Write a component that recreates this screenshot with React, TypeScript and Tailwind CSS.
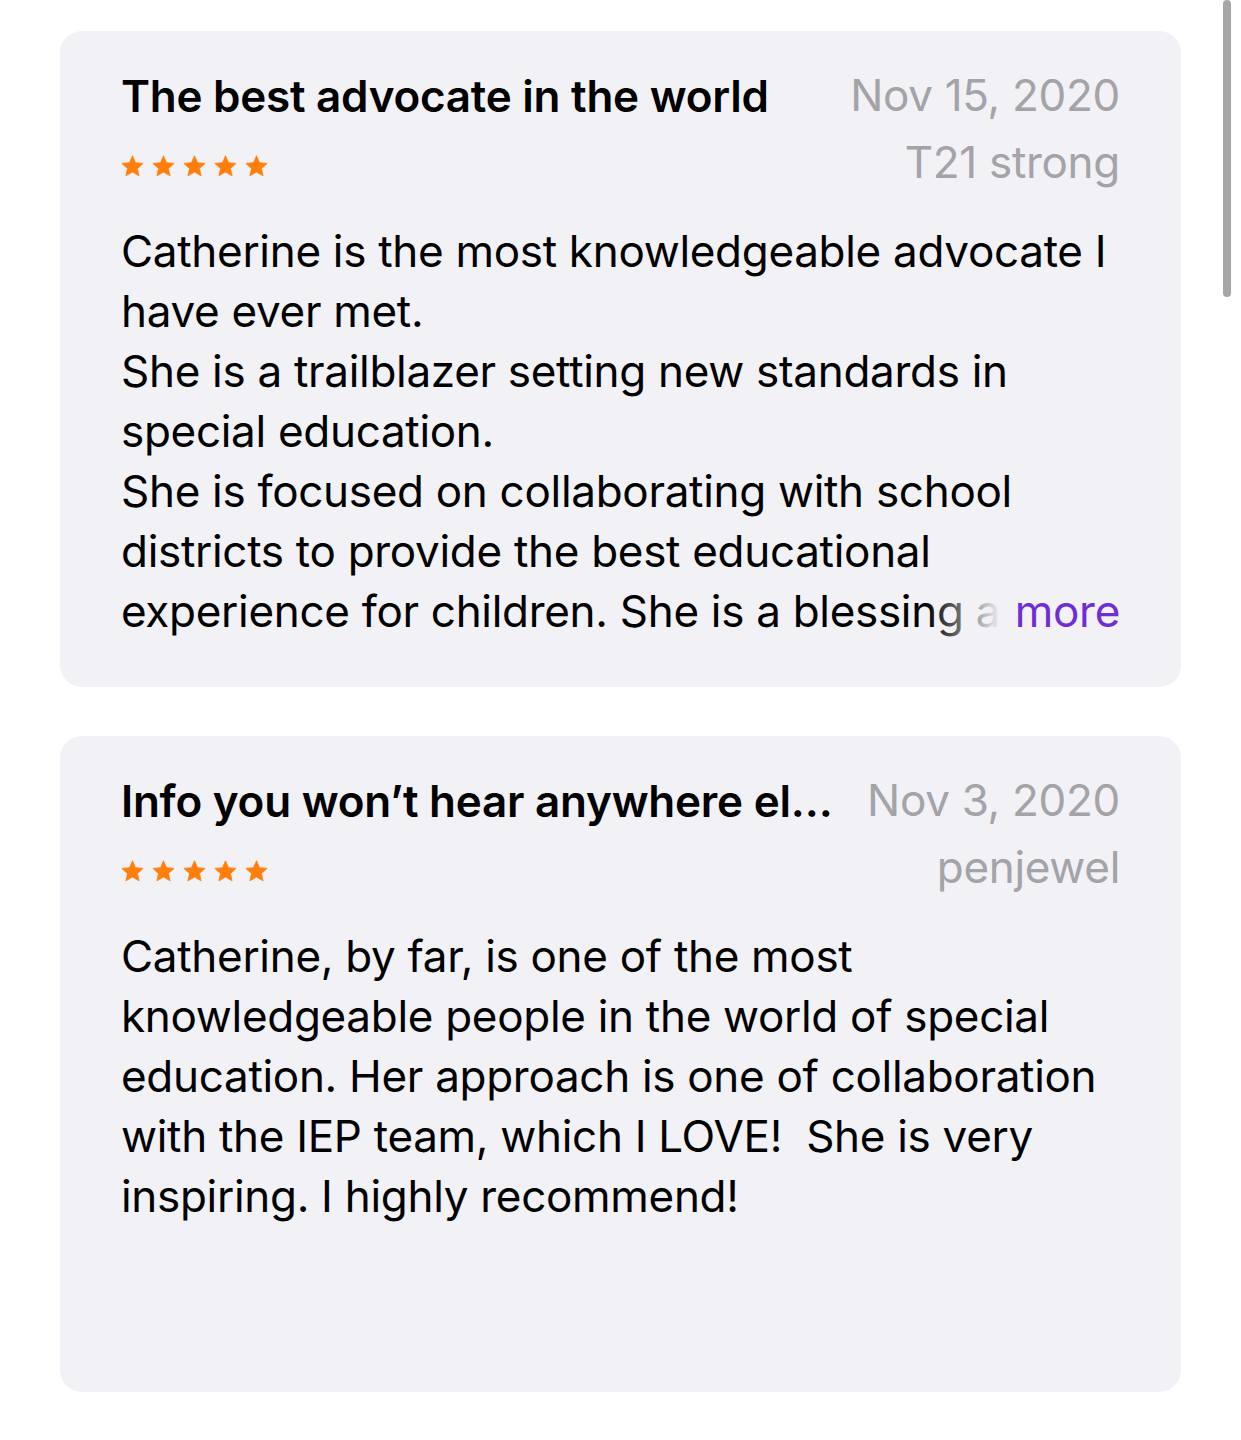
import React from "react";

function Stars() {
  return (
    <div className="flex gap-[8px] mt-[31px]">
      {[0, 1, 2, 3, 4].map((i) => (
        <svg key={i} width="23" height="22" viewBox="0 0 24 23">
          <path
            d="M12 .8L15.2 8l7.9.8-5.9 5.3 1.7 7.7L12 17.9l-6.9 3.9 1.7-7.7L.9 8.8 8.8 8z"
            fill="#ff7f0a"
            stroke="#ff7f0a"
            strokeWidth="0.8"
            strokeLinejoin="round"
          />
        </svg>
      ))}
    </div>
  );
}

function Card({
  title,
  date,
  author,
  children,
}: {
  title: string;
  date: string;
  author: string;
  children: React.ReactNode;
}) {
  return (
    <div className="h-[656px] rounded-[22px] bg-[#f1f1f6] px-[61px] pt-[37px]">
      <div className="flex items-start justify-between gap-[30px]">
        <div className="min-w-0 flex-1">
          <div className="truncate text-[44px] leading-[56px] font-semibold text-black tracking-[-0.25px]">
            {title}
          </div>
          <Stars />
        </div>
        <div className="shrink-0 text-right text-[44px] leading-[67px] text-[#a3a3a8] tracking-[-0.3px] -mt-[6px]">
          <div>{date}</div>
          <div>{author}</div>
        </div>
      </div>
      {children}
    </div>
  );
}

export default function App() {
  return (
    <div
      className="relative min-h-[1440px] bg-white px-[60px] pt-[31px]"
      style={{ fontFamily: "Inter, 'Noto Sans', sans-serif" }}
    >
      <div className="flex flex-col gap-[49px]">
        <Card title="The best advocate in the world" date="Nov 15, 2020" author="T21 strong">
          <div className="relative mt-[25px]">
            <p className="text-[44px] leading-[60px] text-black tracking-[-0.3px] line-clamp-7">
              Catherine is the most knowledgeable advocate I have ever met.
              <br />
              She is a trailblazer setting new standards in special education.
              <br />
              She is focused on collaborating with school districts to provide the best educational
              experience for children. She is a blessing and a gift to every family she works with.
            </p>
            <div className="absolute bottom-0 right-0 flex h-[60px] items-center">
              <div className="h-full w-[75px] bg-gradient-to-r from-[#f1f1f6]/0 to-[#f1f1f6]" />
              <div className="flex h-full items-center bg-[#f1f1f6] pl-[14px] text-[44px] text-[#6f2dd6] tracking-[-0.3px]">
                more
              </div>
            </div>
          </div>
        </Card>
        <Card title="Info you won’t hear anywhere else" date="Nov 3, 2020" author="penjewel">
          <p className="mt-[25px] text-[44px] leading-[60px] text-black tracking-[-0.3px]">
            Catherine, by far, is one of the most knowledgeable people in the world of special
            education. Her approach is one of collaboration with the IEP team, which I LOVE!&nbsp; She
            is very inspiring. I highly recommend!
          </p>
        </Card>
      </div>
      <div className="absolute right-[10px] top-0 h-[297px] w-[8px] rounded-full bg-[#a6a6a6]" />
    </div>
  );
}
